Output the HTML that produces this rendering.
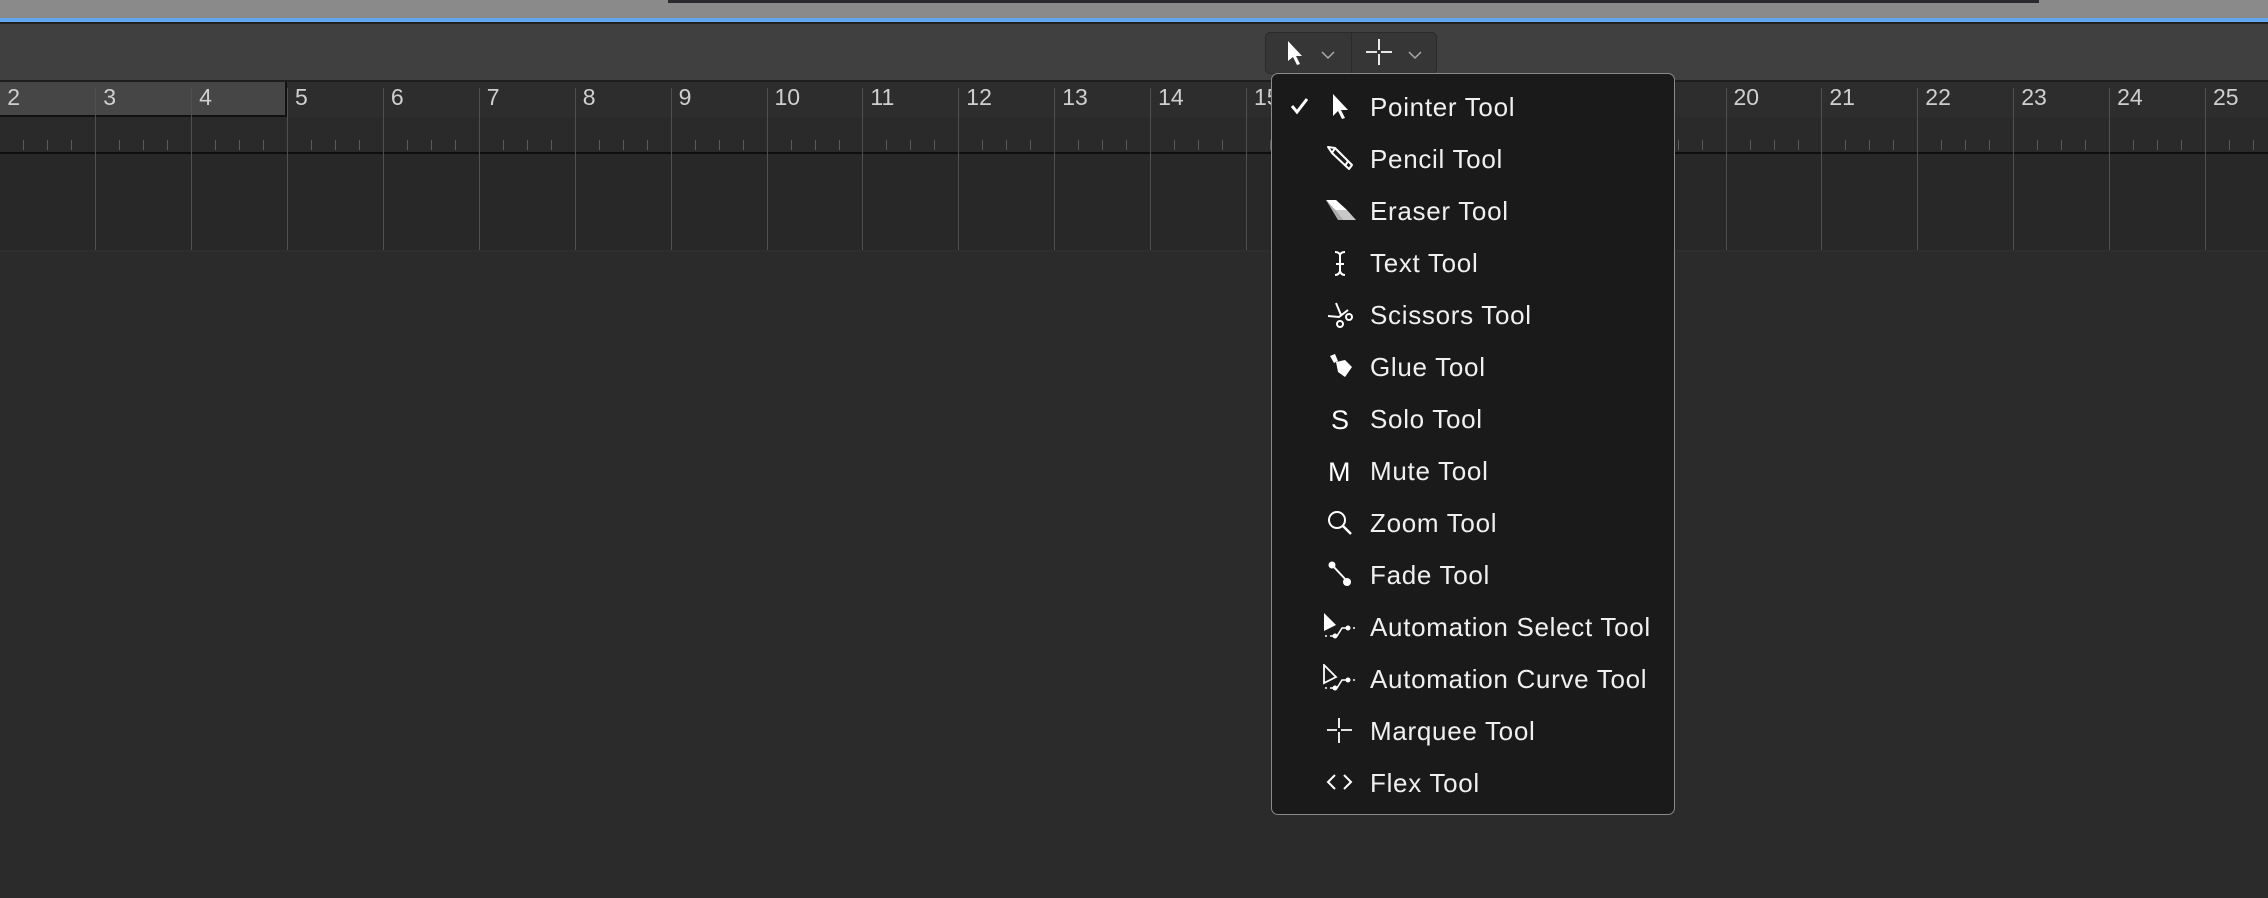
<!DOCTYPE html>
<html><head><meta charset="utf-8"><style>
*{margin:0;padding:0;box-sizing:border-box}
body{width:2268px;height:898px;background:#2b2b2b;position:relative;overflow:hidden;font-family:"Liberation Sans",sans-serif}
.a{position:absolute}
.num{position:absolute;top:84px;font-size:23px;color:#cfcfcf}
.bl{position:absolute;top:88px;width:1px;height:162px;background:#505050}
.tk{position:absolute;top:140px;width:1px;height:10px;background:#5a5a5a}
.menu{position:absolute;left:1271px;top:73px;width:404px;height:742px;background:#1a1a1a;border:1.5px solid #8a8a8a;border-radius:7px}
.it{position:absolute;left:0;height:52px;width:100%}
.it span{position:absolute;left:98px;top:10px;font-size:26px;letter-spacing:0.7px;color:#f0f0f0;white-space:nowrap}
.it svg{position:absolute;left:53px;top:10px}
</style></head><body>
<div class="a" style="left:0;top:0;width:2268px;height:18px;background:#8a8a8a"></div>
<div class="a" style="left:668px;top:0;width:1371px;height:3px;background:#2a2a2e"></div>
<div class="a" style="left:0;top:18px;width:2268px;height:4px;background:#62a8f0"></div>
<div class="a" style="left:0;top:22px;width:2268px;height:2px;background:#222"></div>
<div class="a" style="left:0;top:24px;width:2268px;height:57px;background:#404040"></div>
<div class="a" style="left:0;top:80px;width:2268px;height:2px;background:#1e1e1e"></div>
<div class="a" style="left:0;top:82px;width:2268px;height:35px;background:#2d2d2d"></div>
<div class="a" style="left:0;top:82px;width:287px;height:35px;background:#464646;border-right:2px solid #111;border-bottom:2px solid #111"></div>
<div class="a" style="left:0;top:117px;width:2268px;height:35px;background:#2a2a2a"></div>
<div class="a" style="left:0;top:152px;width:2268px;height:2px;background:#0e0e0e"></div>
<div class="a" style="left:0;top:154px;width:2268px;height:96px;background:#282828"></div>
<div class="a" style="left:0;top:250px;width:2268px;height:2px;background:#2e2e2e"></div>
<div id="r"></div>
<script>
var h='';for(var n=2;n<=25;n++){var x=287+(n-5)*95.9;h+='<div class="bl" style="left:'+x+'px"></div><div class="num" style="left:'+(x+8)+'px">'+n+'</div>';for(var k=1;k<4;k++)h+='<div class="tk" style="left:'+(x+k*24)+'px"></div>';}
document.getElementById('r').innerHTML=h;
</script>
<div class="a" style="left:1265px;top:32px;width:172px;height:42px;background:#363636;border:1px solid #2a2a2a;border-radius:5px"></div>
<div class="a" style="left:1351px;top:33px;width:1px;height:40px;background:#2a2a2a"></div>
<svg class="a" style="left:1285px;top:39px" width="70" height="30"><path d="M3 2 L3 22 L8 18 L12 26 L15 25 L11 17 L17 17 Z" fill="#fff"/><path d="M37 13 L43 19 L49 13" stroke="#aaa" stroke-width="1.5" fill="none"/></svg>
<svg class="a" style="left:1365px;top:39px" width="70" height="30"><path d="M1 13 H12 M16 13 H27 M14 0 V11 M14 15 V26" stroke="#fff" stroke-width="1.8"/><path d="M44 13 L50 19 L56 13" stroke="#aaa" stroke-width="1.5" fill="none"/></svg>
<div class="menu">
<div class="it" style="top:8px"><svg style="left:18px;top:14px" width="20" height="20"><path d="M2 10 L7 16 L17 3" stroke="#fff" stroke-width="3" fill="none"/></svg><svg width="32" height="32"><path d="M8 2 L8 24 L13 19 L17 27 L20 26 L16 18 L23 18 Z" fill="#fff"/></svg><span>Pointer Tool</span></div>
<div class="it" style="top:60px"><svg width="32" height="32"><path d="M3 3 L10 4 L27 21 L24 25 L7 9 Z M10 4 L7 9 M23 17 L20 22" stroke="#fff" stroke-width="2" fill="none" stroke-linejoin="round"/></svg><span>Pencil Tool</span></div>
<div class="it" style="top:112px"><svg width="32" height="32"><path d="M1 4 L11 4 L22 14 L10 14 Z" fill="#fff"/><path d="M10 14 L22 14 L31 24 L18 24 Z" fill="#c8c8c8"/><path d="M1 4 L10 14 L18 24 L13 24 Z" fill="#aaa"/></svg><span>Eraser Tool</span></div>
<div class="it" style="top:164px"><svg width="32" height="32"><path d="M10 4 Q14 4 15 7 Q16 4 20 4 M15 7 V23 M11 16 H19 M10 27 Q14 27 15 23 Q16 27 20 27" stroke="#fff" stroke-width="2" fill="none"/></svg><span>Text Tool</span></div>
<div class="it" style="top:216px"><svg width="32" height="32"><path d="M11 3 L16 15 M3 16 L14 17 L23 10" stroke="#fff" stroke-width="2" fill="none"/><circle cx="24" cy="17" r="3" stroke="#fff" stroke-width="2" fill="none"/><circle cx="15" cy="24" r="3" stroke="#fff" stroke-width="2" fill="none"/></svg><span>Scissors Tool</span></div>
<div class="it" style="top:268px"><svg width="32" height="32"><path d="M5 4 L10 2 L13 9 L9 11 Z" fill="#fff"/><path d="M11 10 L20 8 L27 15 L20 25 L13 20 Z" fill="#fff"/></svg><span>Glue Tool</span></div>
<div class="it" style="top:320px"><svg width="32" height="32"><text x="6" y="25" fill="#fff" font-size="27" font-family="Liberation Sans">S</text></svg><span>Solo Tool</span></div>
<div class="it" style="top:372px"><svg width="32" height="32"><text x="3" y="25" fill="#fff" font-size="27" font-family="Liberation Sans">M</text></svg><span>Mute Tool</span></div>
<div class="it" style="top:424px"><svg width="32" height="32"><circle cx="12" cy="12" r="8" stroke="#fff" stroke-width="2" fill="none"/><path d="M18 18 L26 26" stroke="#fff" stroke-width="2.5"/></svg><span>Zoom Tool</span></div>
<div class="it" style="top:476px"><svg width="32" height="32"><path d="M7 5 L22 21" stroke="#fff" stroke-width="2"/><circle cx="7" cy="5" r="3.5" fill="#fff"/><circle cx="22" cy="22" r="4" fill="#fff"/></svg><span>Fade Tool</span></div>
<div class="it" style="top:528px"><svg width="40" height="34" style="left:50px"><path d="M2 1 L2 19 L14 13 Z" fill="#fff"/><path d="M8 24 L15 24 L20 16 L27 16 M3 24 H5 M31 16 H33" stroke="#fff" stroke-width="1.6" fill="none"/><circle cx="13" cy="24" r="2.5" fill="#fff"/><circle cx="26" cy="16" r="2.5" fill="#fff"/></svg><span>Automation Select Tool</span></div>
<div class="it" style="top:580px"><svg width="40" height="34" style="left:50px"><path d="M2 1 L2 19 L14 13 Z" stroke="#fff" stroke-width="1.8" fill="none"/><path d="M8 24 L15 24 L20 16 L27 16 M3 24 H5 M31 16 H33" stroke="#fff" stroke-width="1.6" fill="none"/><circle cx="13" cy="24" r="2.5" fill="#fff"/><circle cx="26" cy="16" r="2.5" fill="#fff"/></svg><span>Automation Curve Tool</span></div>
<div class="it" style="top:632px"><svg width="32" height="32"><path d="M2 14 H12 M16 14 H27 M14 2 V12 M14 16 V27" stroke="#fff" stroke-width="1.8"/></svg><span>Marquee Tool</span></div>
<div class="it" style="top:684px"><svg width="32" height="32"><path d="M10 7 L3 14 L10 21 M19 7 L26 14 L19 21" stroke="#fff" stroke-width="2" fill="none"/></svg><span>Flex Tool</span></div>
</div>
</body></html>
